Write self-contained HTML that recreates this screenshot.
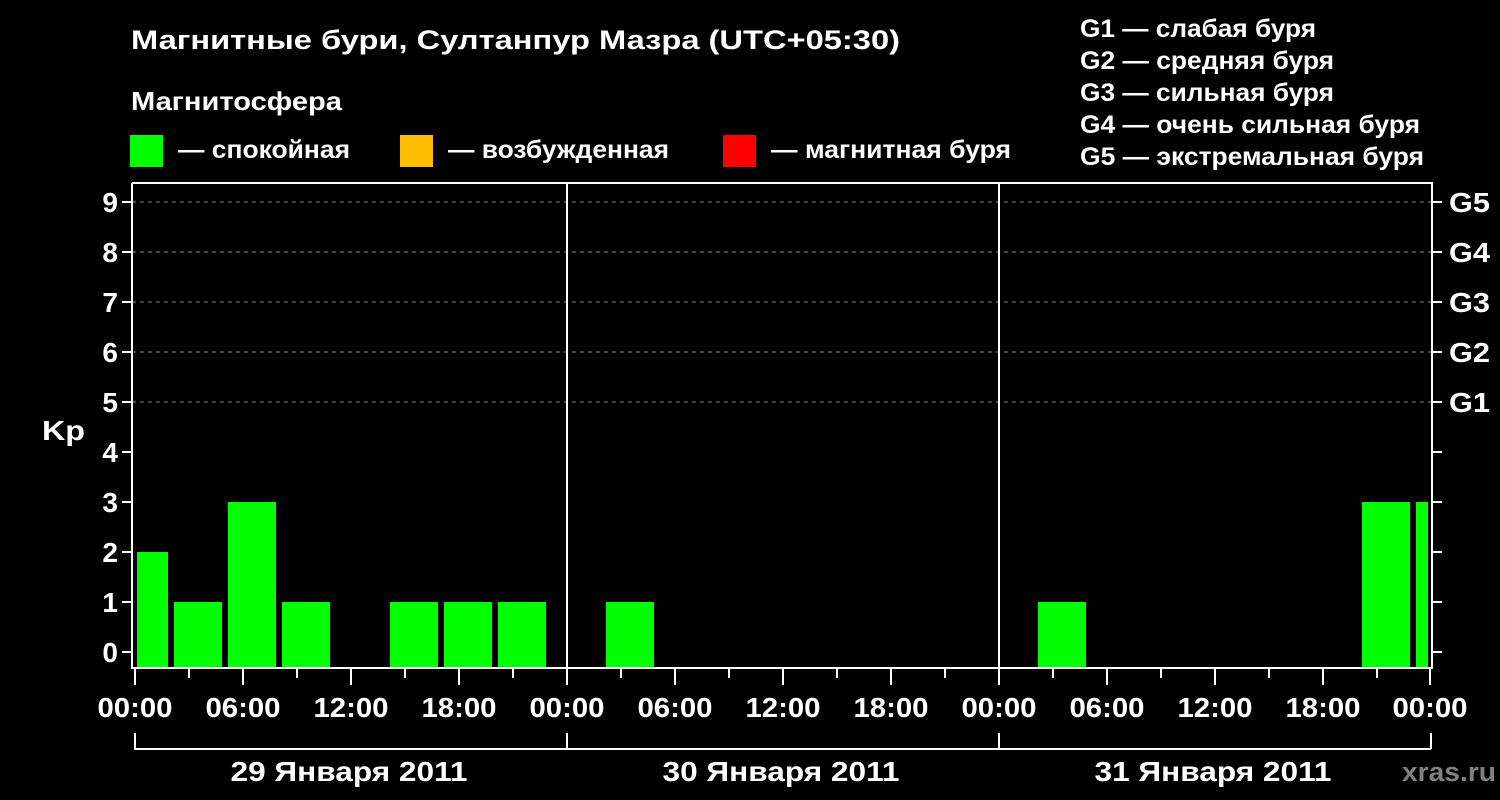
<!DOCTYPE html>
<html><head><meta charset="utf-8"><style>
html,body{margin:0;padding:0;background:#000;}
svg{display:block;}
text{font-family:"Liberation Sans",Arial,sans-serif;font-weight:bold;fill:#fff;}
</style></head><body>
<svg width="1500" height="800" viewBox="0 0 1500 800" xmlns="http://www.w3.org/2000/svg">
<rect width="1500" height="800" fill="#000"/>
<text x="131" y="49" font-size="27" textLength="769" lengthAdjust="spacingAndGlyphs">Магнитные бури, Султанпур Мазра (UTC+05:30)</text>
<text x="131" y="110" font-size="26" textLength="211" lengthAdjust="spacingAndGlyphs">Магнитосфера</text>
<rect x="130" y="135" width="33" height="32" fill="#00ff00"/>
<text x="178" y="158" font-size="25" textLength="172" lengthAdjust="spacingAndGlyphs">— спокойная</text>
<rect x="400" y="135" width="33" height="32" fill="#ffbf00"/>
<text x="448" y="158" font-size="25" textLength="221" lengthAdjust="spacingAndGlyphs">— возбужденная</text>
<rect x="723" y="135" width="33" height="32" fill="#ff0000"/>
<text x="771" y="158" font-size="25" textLength="240" lengthAdjust="spacingAndGlyphs">— магнитная буря</text>
<g font-size="25">
<text x="1080" y="37" textLength="236" lengthAdjust="spacingAndGlyphs">G1 — слабая буря</text>
<text x="1080" y="69" textLength="254" lengthAdjust="spacingAndGlyphs">G2 — средняя буря</text>
<text x="1080" y="101" textLength="254" lengthAdjust="spacingAndGlyphs">G3 — сильная буря</text>
<text x="1080" y="133" textLength="340" lengthAdjust="spacingAndGlyphs">G4 — очень сильная буря</text>
<text x="1080" y="165" textLength="344" lengthAdjust="spacingAndGlyphs">G5 — экстремальная буря</text>
</g>
<g stroke="#888" stroke-width="1" stroke-dasharray="4,4">
<line x1="132" y1="202" x2="1432" y2="202"/>
<line x1="132" y1="252" x2="1432" y2="252"/>
<line x1="132" y1="302" x2="1432" y2="302"/>
<line x1="132" y1="352" x2="1432" y2="352"/>
<line x1="132" y1="402" x2="1432" y2="402"/>
</g>
<g fill="#00ff00">
<rect x="137" y="552" width="31" height="116"/>
<rect x="174" y="602" width="48" height="66"/>
<rect x="228" y="502" width="48" height="166"/>
<rect x="282" y="602" width="48" height="66"/>
<rect x="390" y="602" width="48" height="66"/>
<rect x="444" y="602" width="48" height="66"/>
<rect x="498" y="602" width="48" height="66"/>
<rect x="606" y="602" width="48" height="66"/>
<rect x="1038" y="602" width="48" height="66"/>
<rect x="1362" y="502" width="48" height="166"/>
<rect x="1416" y="502" width="12" height="166"/>
</g>
<g stroke="#fff" stroke-width="2" fill="none">
<polyline points="132,183 1432,183 1432,668 132,668 132,183"/>
<line x1="567" y1="183" x2="567" y2="668"/>
<line x1="999" y1="183" x2="999" y2="668"/>
<path d="M122 202h10M122 252h10M122 302h10M122 352h10M122 402h10M122 452h10M122 502h10M122 552h10M122 602h10M122 652h10"/>
<path d="M1432 202h10M1432 252h10M1432 302h10M1432 352h10M1432 402h10M1432 452h10M1432 502h10M1432 552h10M1432 602h10M1432 652h10"/>
<path d="M135 668v17M189 668v10M243 668v17M297 668v10M351 668v17M405 668v10M459 668v17M513 668v10M567 668v17M621 668v10M675 668v17M729 668v10M783 668v17M837 668v10M891 668v17M945 668v10M999 668v17M1053 668v10M1107 668v17M1161 668v10M1215 668v17M1269 668v10M1323 668v17M1377 668v10M1430 668v17"/>
<path d="M135 733v16H1431M1431 733v16M567 733v16M999 733v16"/>
</g>
<g font-size="28" text-anchor="end">
<text x="118" y="212">9</text><text x="118" y="262">8</text><text x="118" y="312">7</text>
<text x="118" y="362">6</text><text x="118" y="412">5</text><text x="118" y="462">4</text>
<text x="118" y="512">3</text><text x="118" y="562">2</text><text x="118" y="612">1</text>
<text x="118" y="662">0</text>
</g>
<text x="42" y="440" font-size="28" textLength="43" lengthAdjust="spacingAndGlyphs">Kp</text>
<g font-size="28">
<text x="1449" y="212" textLength="41" lengthAdjust="spacingAndGlyphs">G5</text><text x="1449" y="262" textLength="41" lengthAdjust="spacingAndGlyphs">G4</text><text x="1449" y="312" textLength="41" lengthAdjust="spacingAndGlyphs">G3</text>
<text x="1449" y="362" textLength="41" lengthAdjust="spacingAndGlyphs">G2</text><text x="1449" y="412" textLength="41" lengthAdjust="spacingAndGlyphs">G1</text>
</g>
<g font-size="28" text-anchor="middle">
<text x="135" y="717" textLength="75" lengthAdjust="spacingAndGlyphs">00:00</text><text x="243" y="717" textLength="75" lengthAdjust="spacingAndGlyphs">06:00</text><text x="351" y="717" textLength="75" lengthAdjust="spacingAndGlyphs">12:00</text><text x="459" y="717" textLength="75" lengthAdjust="spacingAndGlyphs">18:00</text>
<text x="567" y="717" textLength="75" lengthAdjust="spacingAndGlyphs">00:00</text><text x="675" y="717" textLength="75" lengthAdjust="spacingAndGlyphs">06:00</text><text x="783" y="717" textLength="75" lengthAdjust="spacingAndGlyphs">12:00</text><text x="891" y="717" textLength="75" lengthAdjust="spacingAndGlyphs">18:00</text>
<text x="999" y="717" textLength="75" lengthAdjust="spacingAndGlyphs">00:00</text><text x="1107" y="717" textLength="75" lengthAdjust="spacingAndGlyphs">06:00</text><text x="1215" y="717" textLength="75" lengthAdjust="spacingAndGlyphs">12:00</text><text x="1323" y="717" textLength="75" lengthAdjust="spacingAndGlyphs">18:00</text>
<text x="1430" y="717" textLength="75" lengthAdjust="spacingAndGlyphs">00:00</text>
<text x="349" y="781" textLength="237" lengthAdjust="spacingAndGlyphs">29 Января 2011</text>
<text x="781" y="781" textLength="237" lengthAdjust="spacingAndGlyphs">30 Января 2011</text>
<text x="1213" y="781" textLength="237" lengthAdjust="spacingAndGlyphs">31 Января 2011</text>
</g>
<text x="1402" y="781" font-size="27" textLength="94" lengthAdjust="spacingAndGlyphs" style="fill:#808080">xras.ru</text>
</svg>
</body></html>
